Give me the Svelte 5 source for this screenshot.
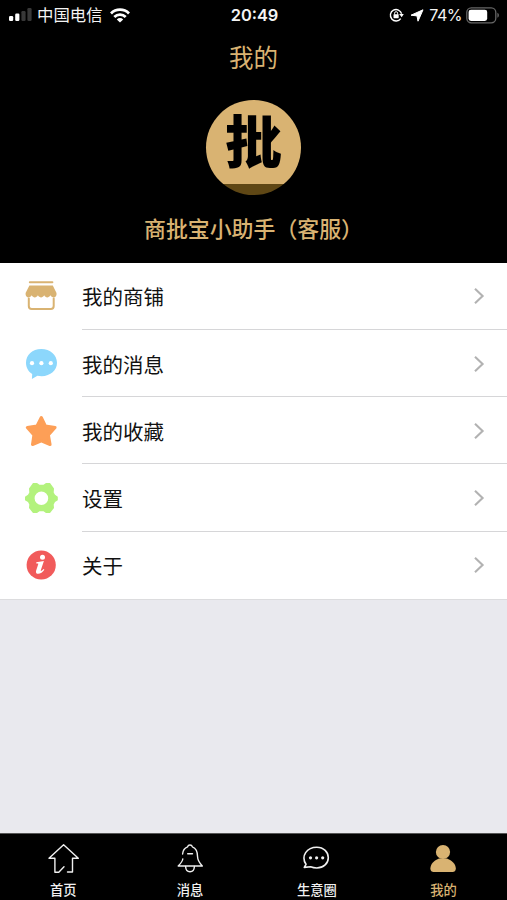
<script lang="ts">
  type Icon = 'shop' | 'chat' | 'star' | 'gear' | 'info';
  type TabIcon = 'home' | 'bell' | 'circle' | 'user';

  const rows: { icon: Icon; label: string }[] = [
    { icon: 'shop', label: '我的商铺' },
    { icon: 'chat', label: '我的消息' },
    { icon: 'star', label: '我的收藏' },
    { icon: 'gear', label: '设置' },
    { icon: 'info', label: '关于' },
  ];

  const tabs: { icon: TabIcon; label: string }[] = [
    { icon: 'home', label: '首页' },
    { icon: 'bell', label: '消息' },
    { icon: 'circle', label: '生意圈' },
    { icon: 'user', label: '我的' },
  ];

  let active = $state<TabIcon>('user');
</script>

<div class="screen">
  <header>
    <div class="status">
      <div class="carrier">
        <svg width="24" height="14" viewBox="0 0 24 14" aria-hidden="true">
          <rect x="0" y="8" width="4.2" height="5" rx="1.2" fill="#fff" />
          <rect x="6.2" y="5.5" width="4.2" height="7.5" rx="1.2" fill="#fff" />
          <rect x="12.4" y="3" width="4.2" height="10" rx="1.2" fill="#383838" />
          <rect x="18.4" y="0" width="4.2" height="13" rx="1.2" fill="#383838" />
        </svg>
        <span>中国电信</span>
        <svg class="wifi" width="20" height="15" viewBox="0 0 20 15" aria-hidden="true">
          <g fill="none" stroke="#fff" stroke-width="2.8">
            <path d="M1 5.4a12.8 12.8 0 0 1 18 0" />
            <path d="M4.3 9a8.1 8.1 0 0 1 11.4 0" />
          </g>
          <path d="M10 14.6L6.8 11.4a4.6 4.6 0 0 1 6.4 0z" fill="#fff" />
        </svg>
      </div>
      <span class="time">20:49</span>
      <div class="power">
        <svg width="15" height="14" viewBox="0 0 15 14" aria-hidden="true">
          <path d="M11.7 10.6a5.7 5.7 0 1 1 .9-4.8" fill="none" stroke="#fff" stroke-width="1.4" />
          <path d="M10.2 6h4.6l-2.1 3.2z" fill="#fff" />
          <rect x="4.5" y="6.2" width="5.2" height="4" rx=".6" fill="#fff" />
          <path d="M5.6 6.5V5.2a1.5 1.5 0 0 1 3 0v1.3" fill="none" stroke="#fff" />
        </svg>
        <svg class="arrow" width="14" height="13" viewBox="0 0 14 13" aria-hidden="true">
          <path d="M13 .8L8 12.2 7 6.9 1 6.2z" fill="#fff" stroke="#fff" stroke-linejoin="round" />
        </svg>
        <span class="percent">74%</span>
        <svg class="battery" width="34" height="17" viewBox="0 0 34 17" aria-hidden="true">
          <rect x=".8" y=".8" width="29" height="15" rx="4.5" fill="none" stroke="#666" stroke-width="1.3" />
          <rect x="2.6" y="2.7" width="18.6" height="11.2" rx="2.4" fill="#fff" />
          <path d="M31.4 5.8c2 .9 2 4.1 0 5z" fill="#666" />
        </svg>
      </div>
    </div>
    <h1>我的</h1>
    <div class="avatar"><span>批</span></div>
    <p class="name">商批宝小助手（客服）</p>
  </header>

  <main>
    {#each rows as row (row.icon)}
      <button type="button" class="row">
        <svg class="icon" width="36" height="36" viewBox="0 0 36 36" aria-hidden="true">
          {#if row.icon === 'shop'}
            <path d="M6.8 4.2h22.6" stroke="#d9b372" stroke-width="2" stroke-linecap="round" />
            <path
              d="M6.4 7.6h23.4l3.7 7.4c.8 4.8-4.2 5.9-6.1 2.3-1.6 2.8-4.8 2.8-6.2 0-1.5 2.8-4.8 2.8-6.3 0-1.5 2.8-4.7 2.8-6.2 0-1.9 3.6-6.7 2.5-6.1-2.3z"
              fill="#d9b372"
            />
            <path
              d="M5.8 20.6v7.5A2.9 2.9 0 0 0 8.7 31h19.1a2.9 2.9 0 0 0 2.9-2.9v-7.5"
              fill="none"
              stroke="#d9b372"
              stroke-width="2"
              stroke-linecap="round"
            />
          {:else if row.icon === 'chat'}
            <path
              d="M18.3 3C9.3 3 3 9 3 16.8c0 5 2.4 8.8 6.2 11.2L8.9 33l5.5-3.2c11 2.3 19.6-4.6 19.6-13C34 9 27.2 3 18.3 3z"
              fill="#8cd7fc"
            />
            <g fill="#fff">
              <circle cx="9" cy="17.2" r="2.1" />
              <circle cx="18.4" cy="17.2" r="2.1" />
              <circle cx="27.8" cy="17.2" r="2.1" />
            </g>
          {:else if row.icon === 'star'}
            <path
              d="M18.3 4.5l4.1 8.4 9.7 1.7-6.7 7.4 1.7 9.5-8.8-3.7-8.8 3.7 1.4-9.6-6.6-7.3 9.7-1.7z"
              fill="#fd9f57"
              stroke="#fd9f57"
              stroke-width="3"
              stroke-linejoin="round"
            />
          {:else if row.icon === 'gear'}
            <path
              fill-rule="evenodd"
              d="M10 3h4l2.5 1.8h4L23 3h4l4 5.5-.3 4 1.3 2.3 2.8 1.9v3.5L32 22.1l-1.3 2.4.3 3.6-4 5h-4l-2.5-1.8h-4L14 33.1h-4l-4-5 .3-3.6L5 22.1l-3-1.9v-3.5L5 14.8l1.3-2.3-.3-4zM18.4 11.4a6.8 6.8 0 1 0 0 13.6 6.8 6.8 0 1 0 0-13.6z"
              fill="#b3f27d"
            />
          {:else}
            <circle cx="18.2" cy="18" r="14.6" fill="#f15b5b" />
            <circle cx="19.5" cy="10.2" r="2.5" fill="#fff" />
            <path
              d="M13.3 15.2l7.6-1.1-3.1 9.2c-.3 1 .8.8 2.8-1.3l.8.7c-2.3 4-9.2 6-8.4 1.2l2.3-6.8c.2-.7-.5-.8-2-.6z"
              fill="#fff"
            />
          {/if}
        </svg>
        <span class="label">
          {row.label}
          <svg width="12" height="18" viewBox="0 0 12 18" aria-hidden="true">
            <path d="M2 1.7L9.6 9 2 16.3" fill="none" stroke="#b2b2b2" stroke-width="2.1" />
          </svg>
        </span>
      </button>
    {/each}
  </main>

  <nav>
    {#each tabs as tab (tab.icon)}
      <button type="button" class="tab" class:active={active === tab.icon} onclick={() => (active = tab.icon)}>
        <svg width="34" height="34" viewBox="0 0 34 34" aria-hidden="true">
          {#if tab.icon === 'home'}
            <path
              d="M12.8 29.2H8.9v-14H3L17.6 1.8 32.3 15.2h-5.8v13.8h-5M12.8 29.2l5.2-5.4"
              fill="none"
              stroke="currentColor"
              stroke-width="1.4"
              stroke-linejoin="round"
              stroke-linecap="round"
            />
          {:else if tab.icon === 'bell'}
            <g fill="none" stroke="currentColor" stroke-width="1.4" stroke-linejoin="round" stroke-linecap="round">
              <path d="M9.6 11c.3-4 2.2-6.2 5-7.2.7-2.4 4-2.4 4.8 0 4 1.4 5.2 4.6 5.2 10.2 0 3 1.5 5.5 4.7 9H5.2c3-3 4.3-5 4.6-7" />
              <path d="M14.7 10.7h4.8" />
              <path d="M12.6 23.5c.4 7 8.4 7 8.8 0" />
            </g>
          {:else if tab.icon === 'circle'}
            <path
              d="M7 21.3C1.5 13 8 4.2 17.8 4.2c7 0 11.5 4.9 11.5 10.5S24.6 25 17.8 25c-2.6 0-4.3-.4-6.2-1.2L5.3 24.4z"
              fill="none"
              stroke="currentColor"
              stroke-width="1.6"
              stroke-linejoin="round"
            />
            <g fill="currentColor">
              <circle cx="11.5" cy="14.8" r="1.6" />
              <circle cx="17.6" cy="14.8" r="1.6" />
              <circle cx="23.7" cy="14.8" r="1.6" />
            </g>
          {:else}
            <circle cx="17" cy="9" r="7.1" fill="currentColor" />
            <path
              d="M13 15.5h8c4 1.4 8.8 5.3 8.8 9.9 0 2.9-2 3.6-5 3.6H9.4c-3 0-5-.7-5-3.6 0-4.6 4.6-8.5 8.6-9.9z"
              fill="currentColor"
            />
          {/if}
        </svg>
        <span>{tab.label}</span>
      </button>
    {/each}
  </nav>
</div>

<style>
  :global(body) {
    background: #000;
  }

  .screen {
    display: flex;
    flex-direction: column;
    height: 100vh;
    background: #e9e9ee;
    font-family: Inter, 'Noto Sans CJK SC', sans-serif;
  }

  button {
    padding: 0;
    border: 0;
    background: none;
    font: inherit;
    text-align: left;
  }

  svg {
    display: block;
    flex: none;
  }

  header {
    display: flex;
    flex-direction: column;
    align-items: center;
    box-sizing: border-box;
    height: 262.6px;
    background: #000;
    color: #d9b372;
  }

  .status {
    display: grid;
    grid-template-columns: 1fr auto 1fr;
    align-items: center;
    box-sizing: border-box;
    width: 100%;
    height: 30px;
    padding: 0 7px 0 9px;
    color: #f4f4f4;
    font-size: 16.4px;
    line-height: 30px;
  }

  .carrier,
  .power {
    display: flex;
    align-items: center;
  }

  .carrier span {
    margin-left: 4px;
  }

  .wifi {
    margin-left: 7px;
  }

  .time {
    font-size: 16.4px;
    font-weight: 600;
  }

  .power {
    justify-content: flex-end;
  }

  .arrow {
    margin: 0 5px 0 6px;
  }

  .percent {
    font-size: 16px;
    letter-spacing: -0.5px;
  }

  .battery {
    margin-left: 4px;
  }

  h1 {
    margin: 13px 0 0;
    font-size: 24.5px;
    font-weight: 400;
    line-height: 30px;
  }

  .avatar {
    display: flex;
    align-items: center;
    justify-content: center;
    width: 95px;
    height: 95px;
    margin-top: 27px;
    border-radius: 50%;
    background: linear-gradient(#d9b372 84px, #5f4715 84px);
    color: #000;
  }

  .avatar span {
    font-size: 57px;
    font-weight: 900;
    line-height: 58px;
    transform: translateY(-5px);
  }

  .name {
    margin: 19px 0 0;
    font-size: 21.9px;
    font-weight: 500;
    line-height: 30px;
    white-space: nowrap;
  }

  main {
    background: #fff;
    border-bottom: 1px solid #dcdcde;
  }

  .row {
    display: flex;
    align-items: center;
    width: 100%;
    height: 67.3px;
    padding-left: 23px;
  }

  .label {
    display: flex;
    flex: 1;
    align-items: center;
    justify-content: space-between;
    box-sizing: border-box;
    height: 100%;
    margin-left: 23px;
    padding: 1px 22px 0 0;
    border-bottom: 1px solid #d6d6d8;
    color: #111;
    font-size: 20.5px;
  }

  .row:last-child .label {
    border-bottom-color: transparent;
  }

  nav {
    display: flex;
    height: 66px;
    margin-top: auto;
    border-top: 1px solid #555;
    background: #000;
  }

  .tab {
    display: flex;
    flex: 1;
    flex-direction: column;
    align-items: center;
    padding-top: 9px;
    color: #f0f0f0;
    font-size: 13.3px;
    font-weight: 500;
    line-height: 20px;
  }

  .tab svg {
    margin-left: -1px;
  }

  .tab span {
    margin-top: 3px;
  }

  .tab.active {
    color: #d9b372;
  }
</style>
